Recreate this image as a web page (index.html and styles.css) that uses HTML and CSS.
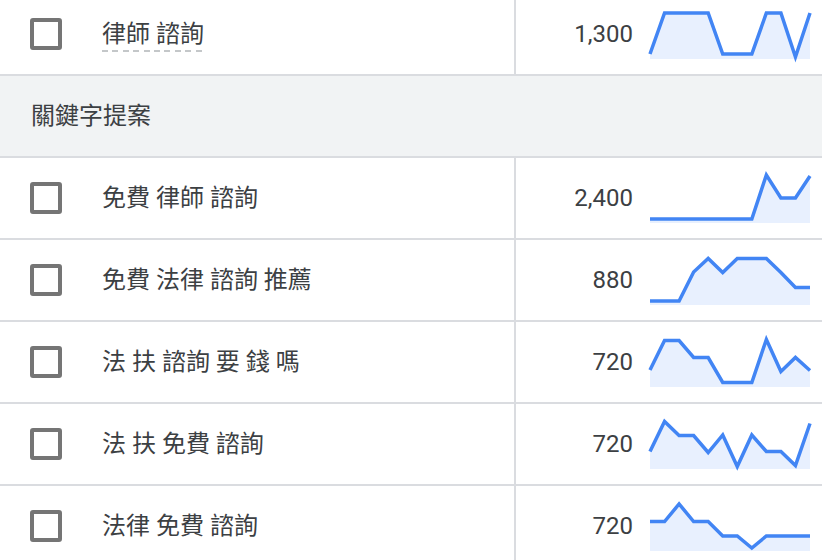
FILE: index.html
```html
<!DOCTYPE html>
<html lang="zh-Hant">
<head>
<meta charset="utf-8">
<title>關鍵字提案</title>
<link rel="stylesheet" href="styles.css">
</head>
<body>
<div class="table">
  <div class="row">
    <div class="kw-cell"><span class="cb"></span><span class="kw dashed">律師 諮詢</span></div>
    <div class="num-cell"><span class="num">1,300</span>
      <svg class="spark" viewBox="0 0 160 50" width="160" height="50">
        <polygon class="area" points="0,45 14.55,4 29.09,4 43.64,4 58.18,4 72.73,45 87.27,45 101.82,45 116.36,4 130.91,4 145.45,48 160,4 160,50 0,50"/>
        <polyline class="line" points="0,45 14.55,4 29.09,4 43.64,4 58.18,4 72.73,45 87.27,45 101.82,45 116.36,4 130.91,4 145.45,48 160,4"/>
      </svg>
    </div>
  </div>
  <div class="group">關鍵字提案</div>
  <div class="row">
    <div class="kw-cell"><span class="cb"></span><span class="kw">免費 律師 諮詢</span></div>
    <div class="num-cell"><span class="num">2,400</span>
      <svg class="spark" viewBox="0 0 160 50" width="160" height="50">
        <polygon class="area" points="0,46 14.55,46 29.09,46 43.64,46 58.18,46 72.73,46 87.27,46 101.82,46 116.36,2 130.91,25 145.45,25 160,3 160,50 0,50"/>
        <polyline class="line" points="0,46 14.55,46 29.09,46 43.64,46 58.18,46 72.73,46 87.27,46 101.82,46 116.36,2 130.91,25 145.45,25 160,3"/>
      </svg>
    </div>
  </div>
  <div class="row">
    <div class="kw-cell"><span class="cb"></span><span class="kw">免費 法律 諮詢 推薦</span></div>
    <div class="num-cell"><span class="num">880</span>
      <svg class="spark" viewBox="0 0 160 50" width="160" height="50">
        <polygon class="area" points="0,46 14.55,46 29.09,46 43.64,17 58.18,3.5 72.73,17.5 87.27,3.5 101.82,3.5 116.36,3.5 130.91,17.5 145.45,32.5 160,32.5 160,50 0,50"/>
        <polyline class="line" points="0,46 14.55,46 29.09,46 43.64,17 58.18,3.5 72.73,17.5 87.27,3.5 101.82,3.5 116.36,3.5 130.91,17.5 145.45,32.5 160,32.5"/>
      </svg>
    </div>
  </div>
  <div class="row">
    <div class="kw-cell"><span class="cb"></span><span class="kw">法 扶 諮詢 要 錢 嗎</span></div>
    <div class="num-cell"><span class="num">720</span>
      <svg class="spark" viewBox="0 0 160 50" width="160" height="50">
        <polygon class="area" points="0,33 14.55,3.5 29.09,3.5 43.64,20.5 58.18,20.5 72.73,45.5 87.27,45.5 101.82,45.5 116.36,2.5 130.91,34.5 145.45,20.5 160,33.5 160,50 0,50"/>
        <polyline class="line" points="0,33 14.55,3.5 29.09,3.5 43.64,20.5 58.18,20.5 72.73,45.5 87.27,45.5 101.82,45.5 116.36,2.5 130.91,34.5 145.45,20.5 160,33.5"/>
      </svg>
    </div>
  </div>
  <div class="row">
    <div class="kw-cell"><span class="cb"></span><span class="kw">法 扶 免費 諮詢</span></div>
    <div class="num-cell"><span class="num">720</span>
      <svg class="spark" viewBox="0 0 160 50" width="160" height="50">
        <polygon class="area" points="0,32.5 14.55,2.5 29.09,16.5 43.64,16.5 58.18,33.5 72.73,16 87.27,47.5 101.82,16 116.36,32.5 130.91,32.5 145.45,46.5 160,4.5 160,50 0,50"/>
        <polyline class="line" points="0,32.5 14.55,2.5 29.09,16.5 43.64,16.5 58.18,33.5 72.73,16 87.27,47.5 101.82,16 116.36,32.5 130.91,32.5 145.45,46.5 160,4.5"/>
      </svg>
    </div>
  </div>
  <div class="row">
    <div class="kw-cell"><span class="cb"></span><span class="kw">法律 免費 諮詢</span></div>
    <div class="num-cell"><span class="num">720</span>
      <svg class="spark" viewBox="0 0 160 50" width="160" height="50">
        <polygon class="area" points="0,20.5 14.55,20.5 29.09,3 43.64,20.5 58.18,20.5 72.73,35 87.27,35 101.82,47 116.36,35 130.91,35 145.45,35 160,35 160,50 0,50"/>
        <polyline class="line" points="0,20.5 14.55,20.5 29.09,3 43.64,20.5 58.18,20.5 72.73,35 87.27,35 101.82,47 116.36,35 130.91,35 145.45,35 160,35"/>
      </svg>
    </div>
  </div>
</div>
</body>
</html>
```

FILE: styles.css
```css
html, body {
  margin: 0;
  padding: 0;
  background: #ffffff;
  overflow: hidden;
}

body {
  font-family: Roboto, "Noto Sans CJK TC", sans-serif;
  font-size: 24px;
  color: #3c4043;
  width: 822px;
  height: 560px;
}

.table {
  margin-top: -6px;
  width: 822px;
}

.row {
  display: grid;
  grid-template-columns: 516px 306px;
  height: 80px;
  border-bottom: 2px solid #dadce0;
}

.kw-cell {
  display: flex;
  align-items: center;
  padding-left: 30px;
  border-right: 2px solid #dadce0;
  box-sizing: border-box;
}

.cb {
  width: 32px;
  height: 32px;
  box-sizing: border-box;
  border: 4px solid #757575;
  border-radius: 3px;
  flex: none;
}

.kw {
  margin-left: 40px;
  line-height: 24px;
  white-space: nowrap;
}

.dashed {
  padding-bottom: 6px;
  margin-bottom: -6px;
  background-image: repeating-linear-gradient(to right, #c4c7c9 0 6px, transparent 6px 10.4px);
  background-size: 100% 2px;
  background-position: left bottom;
  background-repeat: no-repeat;
}

.num-cell {
  display: flex;
  align-items: center;
}

.num {
  width: 117px;
  text-align: right;
  line-height: 24px;
  flex: none;
}

.spark {
  margin-left: 17px;
  display: block;
  overflow: visible;
  flex: none;
}

.area {
  fill: #e8f0fe;
}

.line {
  fill: none;
  stroke: #4285f4;
  stroke-width: 3.5;
}

.group {
  height: 80px;
  display: flex;
  align-items: center;
  padding-left: 31px;
  background: #f1f3f4;
  border-bottom: 2px solid #dadce0;
  line-height: 24px;
}
```
